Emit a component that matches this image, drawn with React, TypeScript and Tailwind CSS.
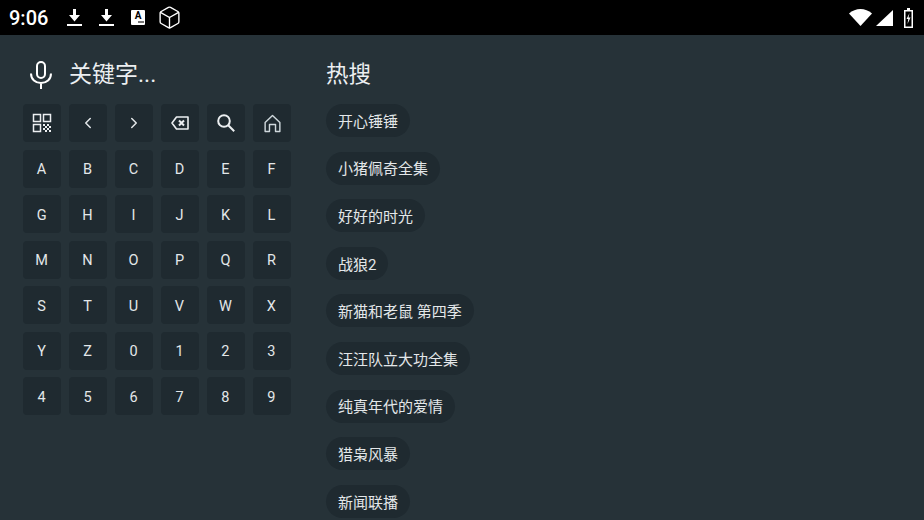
import { ChevronLeft, ChevronRight, Box } from 'lucide-react';

const keys = 'ABCDEFGHIJKLMNOPQRSTUVWXYZ0123456789'.split('');

const hot = ['开心锤锤', '小猪佩奇全集', '好好的时光', '战狼2', '新猫和老鼠 第四季', '汪汪队立大功全集', '纯真年代的爱情', '猎枭风暴', '新闻联播'];

function QrIcon() {
  return (
    <svg width="20" height="20" viewBox="0 0 20 20" fill="none" stroke="#eceff1" strokeWidth="1.5">
      <rect x="1.5" y="1.5" width="7" height="7" />
      <rect x="11.5" y="1.5" width="7" height="7" />
      <rect x="1.5" y="11.5" width="7" height="7" />
      <path d="M11 11h2v2h-2zM15 11h2v2h-2zM13 13h2v2h-2zM17 13h2v2h-2zM11 15h2v2h-2zM15 15h2v2h-2zM13 17h2v2h-2zM17 17h2v2h-2z" fill="#eceff1" stroke="none" />
    </svg>
  );
}

function BackspaceIcon() {
  return (
    <svg width="18" height="14" viewBox="0 0 18 14" fill="none" stroke="#eceff1" strokeWidth="1.6">
      <path d="M5.5 1H17V13H5.5L1 7Z" strokeLinejoin="round" />
      <path d="M8 4.5l5 5M13 4.5l-5 5" strokeWidth="2" />
    </svg>
  );
}

function SearchIcon() {
  return (
    <svg width="18" height="18" viewBox="0 0 18 18" fill="none" stroke="#eceff1" strokeWidth="2">
      <circle cx="7" cy="7" r="5.8" />
      <path d="M11 11l6.2 6.2" />
    </svg>
  );
}

function HomeIcon() {
  return (
    <svg width="17" height="19" viewBox="0 0 18 19" fill="none" stroke="#cfd8dc" strokeWidth="1.5" className="ml-[1px]">
      <path d="M1.2 8.5 9 1l7.8 7.5V18h-4.6v-7.5H5.8V18H1.2Z" strokeLinejoin="round" />
    </svg>
  );
}

function MicIcon() {
  return (
    <svg width="22" height="28" viewBox="0 0 22 28" fill="none" stroke="#fff" strokeWidth="2" className="ml-[7px] shrink-0">
      <rect x="7" y="1" width="8" height="16" rx="4" />
      <path d="M1 12.5c0 6 4.5 9.5 10 9.5s10-3.500 10-9.500M11 22v6" />
    </svg>
  );
}

function DownloadIcon({ className }: { className?: string }) {
  return (
    <svg width="15" height="17" viewBox="0 0 15 17" fill="#fff" className={className}>
      <path d="M6 0h3v6h4l-5.500 6.500L2 6h4Z" />
      <rect x="0" y="15" width="15" height="2" />
    </svg>
  );
}

function Key({ children }: { children: React.ReactNode }) {
  return (
    <div className="flex items-center justify-center h-[38px] rounded bg-[#1f2a30] text-[14.5px] text-[#e3e7e9]">
      {children}
    </div>
  );
}

function StatusBar() {
  return (
    <div className="flex items-center h-[35px] bg-black text-white pl-[9px] pr-[11px] shrink-0">
      <span className="text-[20px] font-medium w-[58px]">9:06</span>
      <DownloadIcon />
      <DownloadIcon className="ml-[17px]" />
      <div className="ml-[17px] flex flex-col items-center w-[14px] h-[15px] rounded-[1px] bg-white text-black text-[10px] leading-[11px] font-bold">
        A
        <span className="block w-[6px] h-[2px] ml-[5px] bg-[#777]" />
      </div>
      <Box size={25} strokeWidth={1.3} className="ml-[12px]" />
      <div className="flex-1" />
      <svg width="23" height="17" viewBox="0 0 23 17">
        <path d="M0 4.500C6.500-1.500 16.500-1.500 23 4.500L11.500 17Z" fill="#fff" />
      </svg>
      <svg width="17" height="16" viewBox="0 0 17 16" className="ml-[4px]">
        <path d="M17 0V16H0Z" fill="#fff" />
      </svg>
      <svg width="9" height="20" viewBox="0 0 9 20" className="ml-[11px]">
        <path d="M3 0h3v2h3v18H0V2h3Z" fill="#fff" />
        <rect x="1.500" y="3.500" width="6" height="15" fill="#000" />
        <path d="M5.500 5 2.500 11h1.800l-.8 5 3-6.500H4.500Z" fill="#fff" />
      </svg>
    </div>
  );
}

export default function App() {
  return (
    <div
      className="flex flex-col w-[924px] h-[520px] overflow-hidden bg-[#263238]"
      style={{ fontFamily: 'Roboto, "Noto Sans CJK SC", sans-serif' }}
    >
      <StatusBar />

      <div className="flex flex-1 pl-[23px] pt-[24px] min-h-0">
        {/* Left: input and keyboard */}
        <div className="w-[268px] mr-[35px] shrink-0">
          <div className="flex items-center h-[32px] mb-[13px] text-[#eceff1]">
            <MicIcon />
            <span className="ml-[17px] pb-[2px] text-[23px] leading-none">关键字...</span>
          </div>
          <div className="grid grid-cols-6 gap-x-[7.8px] gap-y-[7.5px]">
            <Key><QrIcon /></Key>
            <Key><ChevronLeft size={18} /></Key>
            <Key><ChevronRight size={18} /></Key>
            <Key><BackspaceIcon /></Key>
            <Key><SearchIcon /></Key>
            <Key><HomeIcon /></Key>
            {keys.map((k) => (
              <Key key={k}>
                <span className="pt-[3px] pr-[1px]">{k}</span>
              </Key>
            ))}
          </div>
        </div>

        {/* Right: hot searches */}
        <div className="flex-1 min-w-0">
          <div className="flex items-center h-[32px] mb-[13px] pb-[2px] text-[22.5px] leading-none text-[#eceff1]">热搜</div>
          <div className="flex flex-col items-start gap-[14.6px]">
            {hot.map((h) => (
              <div key={h} className="flex items-center h-[33px] shrink-0 px-[12px] pt-[3px] rounded-full bg-[#1f2a30] text-[15px] text-[#e3e7e9]">
                {h}
              </div>
            ))}
          </div>
        </div>
      </div>
    </div>
  );
}
